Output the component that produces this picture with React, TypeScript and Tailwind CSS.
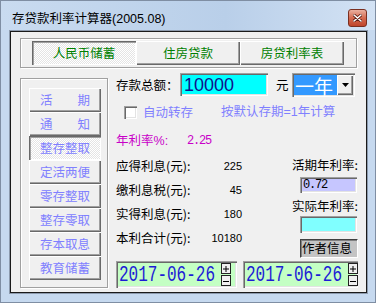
import React from 'react'

const cjk = "font-['Noto_Sans_CJK_SC',sans-serif]"
const mono = "font-['Liberation_Mono',monospace]"
const sans = "font-['Liberation_Sans',sans-serif]"

const raised =
  'bg-[#f0f0f0] shadow-[inset_1px_1px_0_#fff,inset_-1px_-1px_0_#696969,inset_-2px_-2px_0_#a0a0a0]'
const pressed =
  'bg-[image:repeating-conic-gradient(#ffffff_0_25%,#e4e4e4_0_50%)] bg-[length:2px_2px] shadow-[inset_1px_1px_0_#696969,inset_2px_2px_0_#a0a0a0,inset_-1px_-1px_0_#fff]'
const sunken =
  'shadow-[inset_1px_1px_0_#a0a0a0,inset_2px_2px_0_#696969,inset_-1px_-1px_0_#fff,inset_-2px_-2px_0_#e3e3e3]'
const etched = 'border border-[#a0a0a0] shadow-[1px_1px_0_#fff,inset_1px_1px_0_#fff]'

const tabs = ['人民币储蓄', '住房贷款', '房贷利率表']
const kinds: (string | [string, string])[] = [
  ['活', '期'],
  ['通', '知'],
  '整存整取',
  '定活两便',
  '零存整取',
  '整存零取',
  '存本取息',
  '教育储蓄',
]
const results = [
  ['应得利息(元):', '225'],
  ['缴利息税(元):', '45'],
  ['实得利息(元):', '180'],
  ['本利合计(元):', '10180'],
]

function DateBox({ width, value }: { width: string; value: string }) {
  return (
    <div className={`${width} h-[27px] bg-[#c4ffc4] ${sunken} flex items-center pl-[3px]`}>
      <div className="w-[101px] h-full flex items-center overflow-hidden">
        <span className={`${mono} inline-block text-[16px] leading-none text-[#1c1cd6] scale-y-[1.4]`}>
          {value}
        </span>
      </div>
      <div className="ml-[1px] flex flex-col h-full justify-between py-[2px]">
        <div className="w-[10px] h-[11px] bg-[#f0f0f0] border border-[#222] flex items-center justify-center">
          <svg width="6" height="6" viewBox="0 0 6 6">
            <path d="M0 3 H6 M3 0 V6" stroke="#000" strokeWidth="1" />
          </svg>
        </div>
        <div className="w-[10px] h-[11px] bg-[#f0f0f0] border border-[#222] flex items-center justify-center">
          <svg width="6" height="6" viewBox="0 0 6 6">
            <path d="M0 3.5 H6" stroke="#000" strokeWidth="1" />
          </svg>
        </div>
      </div>
    </div>
  )
}

export default function App() {
  return (
    <div
      className={`${cjk} w-[376px] h-[303px] overflow-hidden border border-[#7f8ea3] bg-[#c6d9ef] flex flex-col text-black`}
    >
      {/* title bar */}
      <div className="h-[29px] flex bg-[linear-gradient(to_right,#c9dbf0,#b9cfe9_60%,#d3e2f4)]">
        <div className="pl-[11px] pt-[9px] text-[12.5px] leading-[16px] text-black">
          存贷款利率计算器<span className={sans}>(2005.08)</span>
        </div>
        <div className="ml-auto mr-[8px] mt-[8px] w-[19px] h-[18px] rounded-[3px] border border-[#7a2f20] bg-[linear-gradient(to_bottom,#eab0a0,#d46a50_50%,#c0442a)] flex items-center justify-center">
          <svg width="9" height="8" viewBox="0 0 9 8">
            <path d="M1 1 L8 7 M8 1 L1 7" stroke="#5a1a10" strokeWidth="3" strokeLinecap="round" />
            <path d="M1 1 L8 7 M8 1 L1 7" stroke="#fff" strokeWidth="1.6" strokeLinecap="round" />
          </svg>
        </div>
      </div>

      <div className="flex pl-[8px]">
        {/* client area */}
        <div className="w-[359px] h-[264px] border border-[#8c9aad] shadow-[inset_0_0_0_1px_#1a1a1a] bg-[#f0f0f0] flex flex-col">
          {/* tab frame */}
          <div className={`ml-[10px] mt-[7px] w-[337px] h-[30px] ${etched} pl-[11px] pt-[2px]`}>
            <div className="flex">
              {tabs.map((t, i) => (
                <div
                  key={t}
                  className={`w-[104px] h-[24px] flex items-center justify-center text-[12.5px] leading-none text-[#008000] ${
                    i === 0 ? pressed : raised
                  }`}
                >
                  {t}
                </div>
              ))}
            </div>
          </div>

          <div className="flex ml-[10px] mt-[5px]">
            {/* left list */}
            <div className={`mt-[5px] w-[88px] h-[210px] ${etched} pl-[8px] pt-[9px]`}>
              {kinds.map((k, i) => (
                <div
                  key={i}
                  className={`w-[72px] h-[24px] flex items-center text-[12.5px] leading-none text-[#8080ff] ${
                    i === 2 ? pressed : raised
                  } ${Array.isArray(k) ? 'justify-between px-[11px]' : 'justify-center'}`}
                >
                  {Array.isArray(k) ? (
                    <>
                      <span>{k[0]}</span>
                      <span>{k[1]}</span>
                    </>
                  ) : (
                    k
                  )}
                </div>
              ))}
            </div>

            {/* right content */}
            <div className="ml-[8px] w-[242px] flex flex-col">
              <div className="h-[24px] flex items-start">
                <div className="w-[64px] h-[24px] flex items-center text-[12.5px] leading-none">存款总额：</div>
                <div className={`w-[88px] h-[23px] bg-[#00ffff] ${sunken} flex items-center pl-[4px]`}>
                  <span className={`${sans} text-[18px] leading-none text-[#10108c]`}>10000</span>
                </div>
                <div className="ml-[8px] w-[12px] h-[24px] flex items-center text-[12.5px] leading-none">元</div>
                <div className={`ml-[4px] w-[63px] h-[24px] bg-white ${sunken} flex p-[2px]`}>
                  <div className="flex-1 bg-[#3399ff] text-white text-[19px] leading-none flex items-center pl-[1px]">
                    一年
                  </div>
                  <div className={`w-[16px] ${raised} flex items-center justify-center`}>
                    <svg width="7" height="4" viewBox="0 0 7 4">
                      <path d="M0 0 H7 L3.5 4 Z" fill="#000" />
                    </svg>
                  </div>
                </div>
              </div>

              <div className="mt-[7px] h-[16px] flex items-center text-[12.5px] leading-none text-[#8080ff]">
                <div className={`ml-[8px] w-[13px] h-[13px] bg-white ${sunken}`} />
                <span className="ml-[6px]">自动转存</span>
                <span className="ml-[28px]">
                  按默认存期<span className={sans}>=1</span>年计算
                </span>
              </div>

              <div className="mt-[13px] h-[16px] flex items-center text-[#c800c8]">
                <span className="w-[71px] text-[12.5px] leading-none">
                  年利率<span className={sans}>%:</span>
                </span>
                <span className={`${mono} text-[12px] leading-none tracking-[-1.2px]`}>2.25</span>
              </div>

              <div className="mt-[5px] flex">
                <div className="w-[126px] flex flex-col">
                  {results.map(([l, v]) => (
                    <div key={l} className="h-[24px] flex items-center justify-between">
                      <span className="text-[12.5px] leading-none">{l}</span>
                      <span className={`${sans} text-[11px] leading-none`}>{v}</span>
                    </div>
                  ))}
                </div>
                <div className="ml-[50px] w-[66px] flex flex-col">
                  <div className="h-[22px] flex items-center justify-end text-[12.5px] leading-none">活期年利率:</div>
                  <div className={`mt-[1px] ml-[8px] w-[57px] h-[16px] bg-[#c6c6ff] ${sunken} flex items-center pl-[3px]`}>
                    <span className={`${mono} text-[12px] leading-none tracking-[-1.2px]`}>0.72</span>
                  </div>
                  <div className="mt-[5px] h-[16px] flex items-center justify-end text-[12.5px] leading-none">实际年利率:</div>
                  <div className={`mt-[2px] ml-[8px] w-[57px] h-[17px] bg-[#80ffff] ${sunken}`} />
                  <div className="mt-[6px] ml-[8px] w-[58px] h-[19px] bg-[#c4c4c4] border border-t-[#404040] border-l-[#404040] border-r-white border-b-white shadow-[inset_1px_1px_0_#808080] flex items-center pl-[1px] text-[12.5px] leading-none">
                    作者信息
                  </div>
                </div>
              </div>

              <div className="mt-[3px] flex">
                <DateBox width="w-[122px]" value="2017-06-26" />
                <div className="ml-[6px]">
                  <DateBox width="w-[115px]" value="2017-06-26" />
                </div>
              </div>
            </div>
          </div>
        </div>
      </div>
    </div>
  )
}
